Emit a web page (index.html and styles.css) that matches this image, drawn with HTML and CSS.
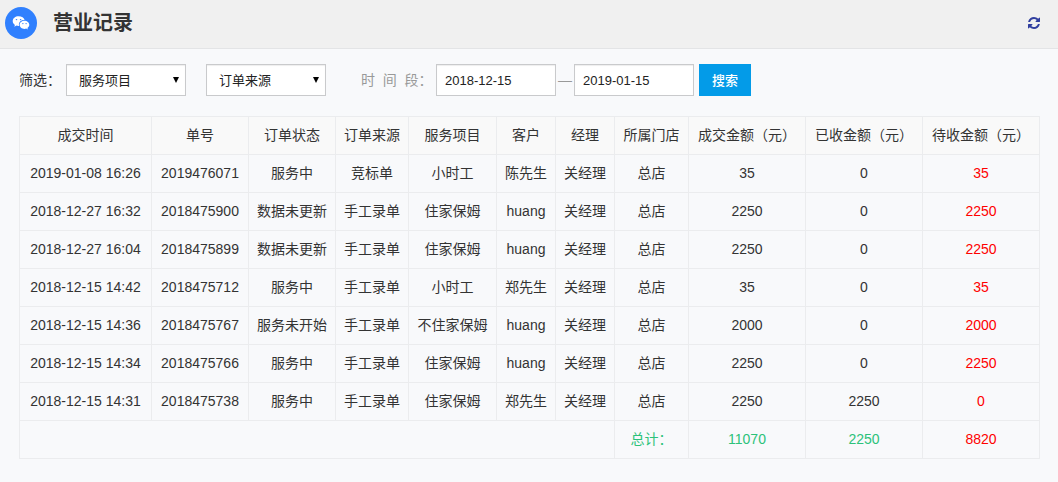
FILE: index.html
```html
<!DOCTYPE html>
<html lang="zh-CN">
<head>
<meta charset="utf-8">
<meta name="viewport" content="width=device-width, initial-scale=1">
<title>营业记录</title>
<link rel="stylesheet" href="styles.css">
</head>
<body>
<header class="topbar">
  <span class="logo">
    <svg viewBox="0 0 32 32" aria-hidden="true">
      <path fill="#fff" fill-rule="evenodd" d="M13.6 9.2c-3.3 0-5.9 2.1-5.9 4.9 0 1.600.8 2.900 2.200 3.800l-.6 1.800 2.200-1.100c.8.2 1.500.3 2.200.3h.4c-.1-.4-.2-.9-.2-1.300 0-2.600 2.300-4.700 5.200-4.700h.5c-.5-2.200-2.900-3.700-6-3.700zM10.700 12.600a.8.7 0 1 1 1.600 0a.8.7 0 1 1-1.600 0zM14.800 12.600a.8.7 0 1 1 1.600 0a.8.7 0 1 1-1.600 0z"/>
      <path fill="#fff" fill-rule="evenodd" d="M24.300 17.800c0-2.300-2.200-4.100-4.800-4.100-2.700 0-4.900 1.800-4.900 4.100s2.200 4.100 4.900 4.100c.6 0 1.200-.1 1.700-.3l1.700.9-.5-1.500c1.200-.8 1.900-1.900 1.900-3.200zM17.200 16.600a.7.6 0 1 1 1.400 0a.7.6 0 1 1-1.400 0zM20.400 16.600a.7.6 0 1 1 1.400 0a.7.6 0 1 1-1.400 0z"/>
    </svg>
  </span>
  <h1 class="title">营业记录</h1>
  <button class="refresh" type="button" aria-label="刷新">
    <svg viewBox="0 0 1536 1536" aria-hidden="true">
      <path fill="#303f9f" d="M1511 928q0 5-1 7-64 268-268 434.500T764 1536q-146 0-282.500-55T238 1324l-129 129q-19 19-45 19t-45-19-19-45V960q0-26 19-45t45-19h448q26 0 45 19t19 45-19 45l-137 137q71 66 161 102t187 36q134 0 250-65t186-179q11-17 53-117 8-23 30-23h192q13 0 22.500 9.500t9.500 22.500zM1536 128v448q0 26-19 45t-45 19h-448q-26 0-45-19t-19-45 19-45l138-138Q969 256 768 256q-134 0-250 65T332 500q-11 17-53 117-8 23-30 23H50q-13 0-22.500-9.500T18 608v-7q65-268 270-434.500T768 0q146 0 284 55.500T1297 212l130-129q19-19 45-19t45 19 19 45z"/>
    </svg>
  </button>
</header>
<main class="content">
  <form class="filters">
    <label class="filter-label" for="service">筛选：</label>
    <span class="picker">
      <select id="service" class="field"><option>服务项目</option></select>
      <svg class="arrow" viewBox="0 0 6 6" aria-hidden="true"><path d="M0 0h6L3 6z"/></svg>
    </span>
    <span class="picker">
      <select id="source" class="field" aria-label="订单来源"><option>订单来源</option></select>
      <svg class="arrow" viewBox="0 0 6 6" aria-hidden="true"><path d="M0 0h6L3 6z"/></svg>
    </span>
    <label class="range-label" for="from">时&nbsp;&nbsp;间&nbsp;&nbsp;段：</label>
    <span class="range">
      <input id="from" class="field date" type="text" value="2018-12-15">
      <span class="dash">—</span>
      <input class="field date" type="text" value="2019-01-15" aria-label="结束日期">
    </span>
    <button class="search" type="button">搜索</button>
  </form>
  <table class="records">
    <colgroup>
      <col class="c-time"><col class="c-no"><col class="c-status"><col class="c-source"><col class="c-service"><col class="c-name"><col class="c-name"><col class="c-store"><col class="c-money"><col class="c-money"><col class="c-money">
    </colgroup>
    <thead>
      <tr><th>成交时间</th><th>单号</th><th>订单状态</th><th>订单来源</th><th>服务项目</th><th>客户</th><th>经理</th><th>所属门店</th><th>成交金额（元）</th><th>已收金额（元）</th><th>待收金额（元）</th></tr>
    </thead>
    <tbody>
      <tr><td>2019-01-08 16:26</td><td>2019476071</td><td>服务中</td><td>竞标单</td><td>小时工</td><td>陈先生</td><td>关经理</td><td>总店</td><td>35</td><td>0</td><td class="due">35</td></tr>
      <tr><td>2018-12-27 16:32</td><td>2018475900</td><td>数据未更新</td><td>手工录单</td><td>住家保姆</td><td>huang</td><td>关经理</td><td>总店</td><td>2250</td><td>0</td><td class="due">2250</td></tr>
      <tr><td>2018-12-27 16:04</td><td>2018475899</td><td>数据未更新</td><td>手工录单</td><td>住家保姆</td><td>huang</td><td>关经理</td><td>总店</td><td>2250</td><td>0</td><td class="due">2250</td></tr>
      <tr><td>2018-12-15 14:42</td><td>2018475712</td><td>服务中</td><td>手工录单</td><td>小时工</td><td>郑先生</td><td>关经理</td><td>总店</td><td>35</td><td>0</td><td class="due">35</td></tr>
      <tr><td>2018-12-15 14:36</td><td>2018475767</td><td>服务未开始</td><td>手工录单</td><td>不住家保姆</td><td>huang</td><td>关经理</td><td>总店</td><td>2000</td><td>0</td><td class="due">2000</td></tr>
      <tr><td>2018-12-15 14:34</td><td>2018475766</td><td>服务中</td><td>手工录单</td><td>住家保姆</td><td>huang</td><td>关经理</td><td>总店</td><td>2250</td><td>0</td><td class="due">2250</td></tr>
      <tr><td>2018-12-15 14:31</td><td>2018475738</td><td>服务中</td><td>手工录单</td><td>住家保姆</td><td>郑先生</td><td>关经理</td><td>总店</td><td>2250</td><td>2250</td><td class="due">0</td></tr>
    </tbody>
    <tfoot>
      <tr><td colspan="7"></td><td class="total">总计：</td><td class="total">11070</td><td class="total">2250</td><td class="due">8820</td></tr>
    </tfoot>
  </table>
</main>
</body>
</html>
```
FILE: styles.css
```css
* {
  box-sizing: border-box;
}

body {
  margin: 0;
  background: #f8f9fb;
  color: #333;
  font: 14px/21px "Liberation Sans", "Noto Sans CJK SC", sans-serif;
}

.topbar {
  display: flex;
  align-items: center;
  height: 49px;
  padding: 0 18px 3px 5px;
  background: #f0f0f0;
  border-bottom: 1px solid #e3e4e6;
}

.logo {
  width: 32px;
  height: 32px;
  border-radius: 50%;
  background: #3080fe;
}

.logo svg,
.refresh svg {
  display: block;
  width: 100%;
}

.title {
  margin: 0 auto 0 16px;
  font-size: 20px;
  line-height: 28px;
}

.refresh {
  width: 12px;
  padding: 0;
  border: 0;
  background: none;
}

.content {
  padding: 15px 18px 20px 19px;
}

.filters {
  display: flex;
  align-items: center;
  margin-bottom: 20px;
}

.filter-label {
  width: 47px;
  white-space: nowrap;
}

.picker {
  position: relative;
  margin-right: 20px;
}

.arrow {
  position: absolute;
  top: 13px;
  right: 7px;
  width: 6px;
  height: 6px;
  pointer-events: none;
}

.field {
  display: block;
  width: 120px;
  height: 32px;
  padding: 0 12px;
  border: 1px solid #c9cacc;
  border-radius: 0;
  background: #fff;
  box-shadow: inset 0 1px 1px #eee;
  color: #222;
  font: inherit;
  font-size: 13px;
  appearance: none;
}

.date {
  padding: 0 8px;
}

.range-label {
  width: 75px;
  margin-left: 15px;
  color: #999;
  white-space: nowrap;
}

.range {
  display: flex;
  align-items: center;
}

.dash {
  width: 18px;
  color: #999;
  text-align: center;
}

.search {
  width: 52px;
  height: 32px;
  margin-left: 5px;
  padding: 0;
  border: 0;
  background: #039be8;
  color: #fff;
  font: inherit;
  font-size: 13px;
  font-weight: 500;
}

.records {
  width: 100%;
  table-layout: fixed;
  border-collapse: collapse;
  text-align: center;
}

.records th,
.records td {
  height: 38px;
  padding: 8px 0;
  border: 1px solid #ebecee;
  font-weight: 400;
  white-space: nowrap;
}

.records th {
  background: #f9f9f9;
}

.c-time { width: 132px; }
.c-no { width: 97px; }
.c-status { width: 87px; }
.c-source { width: 73px; }
.c-service { width: 88px; }
.c-name { width: 59px; }
.c-store { width: 74px; }
.c-money { width: 117px; }

.records .due {
  color: #f00;
}

.records .total {
  color: #2cc27a;
}
```
